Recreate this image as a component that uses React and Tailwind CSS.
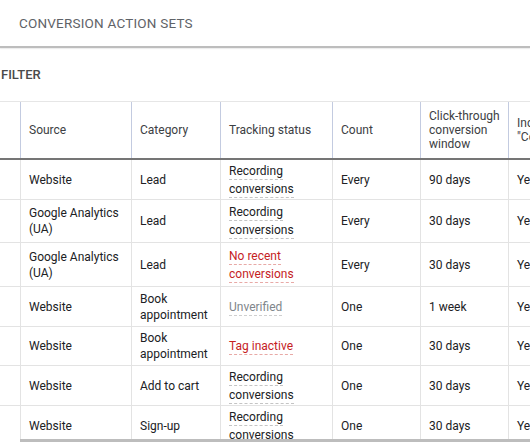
import React from 'react';

const COLS = [
    { key: 'source', label: 'Source', w: 'w-[111px]' },
    { key: 'category', label: 'Category', w: 'w-[89px]' },
    { key: 'status', label: 'Tracking status', w: 'w-[112px]' },
    { key: 'count', label: 'Count', w: 'w-[88px]' },
    { key: 'window', label: 'Click-through conversion window', w: 'w-[88px]' },
    { key: 'include', label: 'Include in "Conversions"', w: 'w-[110px]' },
];

const ROWS = [
    { h: 'h-[40px]', source: 'Website', category: 'Lead', status: 'Recording conversions', tone: 'ok', count: 'Every', window: '90 days', include: 'Yes' },
    { h: 'h-[43px]', source: 'Google Analytics (UA)', category: 'Lead', status: 'Recording conversions', tone: 'ok', count: 'Every', window: '30 days', include: 'Yes' },
    { h: 'h-[44px]', source: 'Google Analytics (UA)', category: 'Lead', status: 'No recent conversions', tone: 'bad', count: 'Every', window: '30 days', include: 'Yes' },
    { h: 'h-[40px]', source: 'Website', category: 'Book appointment', status: 'Unverified', tone: 'muted', count: 'One', window: '1 week', include: 'Yes' },
    { h: 'h-[39px]', source: 'Website', category: 'Book appointment', status: 'Tag inactive', tone: 'bad', count: 'One', window: '30 days', include: 'Yes' },
    { h: 'h-[40px]', source: 'Website', category: 'Add to cart', status: 'Recording conversions', tone: 'ok', count: 'One', window: '30 days', include: 'Yes' },
    { h: 'h-[40px]', source: 'Website', category: 'Sign-up', status: 'Recording conversions', tone: 'ok', count: 'One', window: '30 days', include: 'Yes' },
];

const TONES = {
    ok: 'text-[#202124] border-[#c4c4c4]',
    bad: 'text-[#c5221f] border-[#e8a9a6]',
    muted: 'text-[#80868b] border-[#cfcfcf]',
};

function Status({ text, tone }) {
    return (
        <div className="leading-[18px]">
            <span className={`border-b border-dashed pb-[1px] ${TONES[tone]}`}>{text}</span>
        </div>
    );
}

export default function App() {
    return (
        <div className="relative w-[530px] h-[442px] overflow-hidden bg-white font-['Roboto','Liberation_Sans',sans-serif]">
            {/* Header */}
            <div className="h-[46px] flex items-center pl-[19px] text-[13.5px] tracking-[0.2px] text-[#5f6368]">
                CONVERSION ACTION SETS
            </div>
            <div className="h-[2px] bg-[#bdbdbd] shadow-[0_1px_1px_rgba(0,0,0,0.08)]" />

            {/* Filter bar */}
            <div className="h-[53px] flex items-center pl-[1px] text-[13px] font-medium text-[#4a4a4a]">
                FILTER
            </div>

            {/* Table */}
            <div className="w-[650px] border-t border-[#e6e6e6] text-[12px] text-[#202124]">
                <div className="flex h-[58px] border-b-2 border-[#757575] text-[#3c4043] leading-[14px]">
                    <div className="w-[20px] shrink-0" />
                    {COLS.map((c) => (
                        <div key={c.key} className={`${c.w} shrink-0 border-l border-[#c3cbe0] px-[8px] flex items-center`}>
                            {c.label}
                        </div>
                    ))}
                </div>
                {ROWS.map((r, i) => (
                    <div key={i} className={`flex ${r.h} border-b border-[#e3e3e3] leading-[16px]`}>
                        <div className="w-[20px] shrink-0" />
                        {COLS.map((c) => (
                            <div key={c.key} className={`${c.w} shrink-0 border-l border-[#e3e3e3] px-[8px] flex items-center`}>
                                {c.key === 'status' ? <Status text={r.status} tone={r.tone} /> : <div>{r[c.key]}</div>}
                            </div>
                        ))}
                    </div>
                ))}
            </div>

            {/* Horizontal scrollbar */}
            <div className="absolute bottom-0 left-[20px] right-0 h-[3px] bg-[#bdbdbd]" />
        </div>
    );
}
